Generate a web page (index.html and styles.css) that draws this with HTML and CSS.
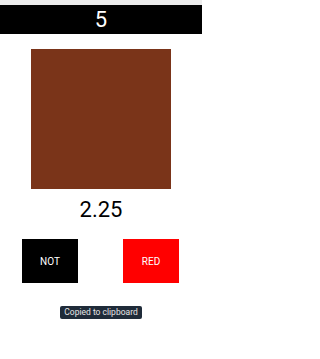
FILE: index.html
```html
<!DOCTYPE html>
<html>
<head>
<meta charset="utf-8">
<meta name="viewport" content="width=device-width, initial-scale=1">
<link rel="stylesheet" href="styles.css">
</head>
<body>
<div class="page">
  <div class="status"></div>
  <div class="bar">5</div>
  <div class="swatch"></div>
  <div class="value">2.25</div>
  <div class="buttons">
    <div class="btn btn-not">NOT</div>
    <div class="btn btn-red">RED</div>
  </div>
  <div class="toast-wrap"><div class="toast">Copied to clipboard</div></div>
</div>
</body>
</html>
```
FILE: styles.css
```css
html, body {
  margin: 0;
  padding: 0;
  background: #ffffff;
  font-family: Roboto, "Liberation Sans", sans-serif;
}
.page {
  width: 202px;
  height: 359px;
  overflow: hidden;
}
.status {
  height: 5px;
  background: #ececec;
}
.bar {
  height: 29px;
  line-height: 30px;
  background: #000000;
  color: #ffffff;
  font-size: 22px;
  text-align: center;
}
.swatch {
  width: 140px;
  height: 140px;
  margin: 15px auto 0;
  background: #7a3419;
}
.value {
  margin-top: 8px;
  font-size: 22px;
  line-height: 26px;
  text-align: center;
  color: #000000;
}
.buttons {
  display: flex;
  justify-content: space-between;
  padding: 0 23px 0 22px;
  margin-top: 16px;
}
.btn {
  width: 56px;
  height: 44px;
  display: flex;
  align-items: center;
  justify-content: center;
  color: #ffffff;
  font-size: 10px;
}
.btn-not {
  background: #000000;
}
.btn-red {
  background: #ff0000;
}
.toast-wrap {
  display: flex;
  justify-content: center;
  margin-top: 23px;
}
.toast {
  background: #1f2b39;
  color: #e6e6e6;
  font-size: 8.5px;
  line-height: 13px;
  padding: 0 4px;
  border-radius: 2px;
}
```
